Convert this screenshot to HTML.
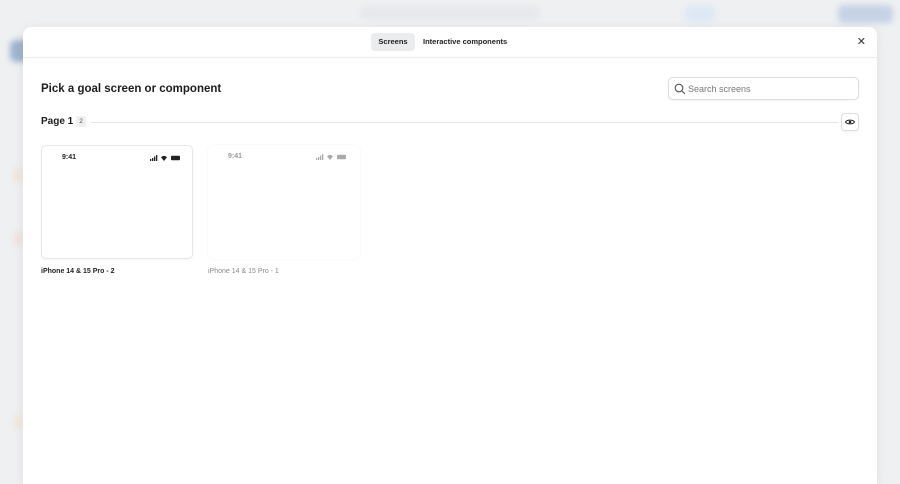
<!DOCTYPE html>
<html><head><meta charset="utf-8"><style>
*{box-sizing:border-box;margin:0;padding:0}
html,body{width:900px;height:484px;overflow:hidden}
body{background:#eef0f2;font-family:"Liberation Sans",sans-serif;position:relative}
.blur{position:absolute;filter:blur(3px);border-radius:6px}
.modal{position:absolute;left:23px;top:27px;width:854px;height:457px;background:#fff;border-radius:8px 8px 0 0;box-shadow:0 2px 10px rgba(0,0,0,.08)}
.top{height:31px;border-bottom:1px solid #ececee;position:relative}
.tab{position:absolute;top:6px;height:18px;font-size:7.5px;font-weight:bold;line-height:18px;color:#222;padding:0 8px;border-radius:4px}
.close{position:absolute;right:11px;top:8px;font-size:11px;color:#333}
h1{position:absolute;left:18px;top:56px;font-size:11.5px;font-weight:bold;color:#1d1d1f}
.search{position:absolute;left:645px;top:50px;width:191px;height:23px;border:1px solid #dcdde0;border-radius:5px;box-shadow:0 1px 2px rgba(0,0,0,.05)}
.search span{position:absolute;left:19px;top:5.5px;font-size:9px;color:#777}
.page{position:absolute;left:18px;top:89px;font-size:10px;font-weight:bold;color:#1d1d1f}
.badge{position:absolute;left:53px;top:89px;width:10px;height:11px;background:#eef0f2;border-radius:2px;font-size:6.5px;text-align:center;line-height:11px;color:#555}
.line{position:absolute;left:68px;top:95px;width:747px;height:1px;background:#e3e4e6}
.eye{position:absolute;left:818px;top:86px;width:18px;height:18px;border:1px solid #dcdde0;border-radius:4px;box-shadow:0 1px 2px rgba(0,0,0,.06)}
.card{position:absolute;top:118px;width:152px;height:114px;border-radius:5px}
.t{position:absolute;top:8px;left:20px;font-size:7px;font-weight:bold}
.lbl{position:absolute;top:241px;font-size:7px;font-weight:bold}
</style></head><body>
<div class="blur" style="left:10px;top:40px;width:20px;height:22px;background:#9fb3cf"></div>
<div class="blur" style="left:838px;top:5px;width:55px;height:18px;background:#c6d2e6"></div>
<div class="blur" style="left:685px;top:6px;width:30px;height:16px;background:#dce8f4"></div>
<div class="blur" style="left:360px;top:6px;width:180px;height:14px;background:#e6e8eb"></div>
<div class="blur" style="left:14px;top:168px;width:8px;height:14px;background:#f3e4d6"></div>
<div class="blur" style="left:14px;top:232px;width:8px;height:14px;background:#f3e0da"></div>
<div class="blur" style="left:14px;top:415px;width:8px;height:14px;background:#f3e6d8"></div>
<div class="modal">
 <div class="top">
  <div class="tab" style="left:348px;background:#ebecee;width:44px;text-align:center;padding:0">Screens</div>
  <div class="tab" style="left:392px">Interactive components</div>
  <div class="close">✕</div>
 </div>
 <h1>Pick a goal screen or component</h1>
 <div class="search"><svg width="12" height="12" style="position:absolute;left:5px;top:5px" viewBox="0 0 12 12"><circle cx="5" cy="5" r="3.8" fill="none" stroke="#555" stroke-width="1.1"/><path d="M8 8l3 3" stroke="#555" stroke-width="1.1"/></svg><span>Search screens</span></div>
 <div class="page">Page 1</div>
 <div class="badge">2</div>
 <div class="line"></div>
 <div class="eye"><svg width="16" height="16" viewBox="0 0 16 16"><path d="M3.5 8c1.5-2.5 7.5-2.5 9 0c-1.5 2.5-7.5 2.5-9 0z" fill="none" stroke="#222" stroke-width="1.1"/><circle cx="8" cy="8" r="1.3" fill="#222"/></svg></div>
 <div class="card" style="left:18px;border:1px solid #e6e7e9;box-shadow:0 1px 2px rgba(0,0,0,.04)">
  <div class="t" style="color:#222">9:41</div>
  <svg style="position:absolute;left:108px;top:9px" width="32" height="6" viewBox="0 0 32 6"><rect x="0" y="4" width="1.3" height="2" fill="#222"/><rect x="2" y="3" width="1.3" height="3" fill="#222"/><rect x="4" y="1.5" width="1.3" height="4.5" fill="#222"/><rect x="6" y="0" width="1.3" height="6" fill="#222"/><path d="M11 2.2a4 4 0 0 1 6 0L14 6z" fill="#222"/><rect x="21" y="0.8" width="9" height="4.4" rx="1" fill="#222"/></svg>
 </div>
 <div class="card" style="left:185px;box-shadow:0 0 2px rgba(0,0,0,.05)">
  <div class="t" style="color:#999">9:41</div>
  <svg style="position:absolute;left:108px;top:9px" width="32" height="6" viewBox="0 0 32 6"><g fill="#aaa"><rect x="0" y="4" width="1.3" height="2"/><rect x="2" y="3" width="1.3" height="3"/><rect x="4" y="1.5" width="1.3" height="4.5"/><rect x="6" y="0" width="1.3" height="6"/><path d="M11 2.2a4 4 0 0 1 6 0L14 6z"/><rect x="21" y="0.8" width="9" height="4.4" rx="1"/></g></svg>
 </div>
 <div class="lbl" style="left:18px;color:#222">iPhone 14 &amp; 15 Pro - 2</div>
 <div class="lbl" style="left:185px;color:#888;font-weight:normal">iPhone 14 &amp; 15 Pro - 1</div>
</div>
</body></html>
